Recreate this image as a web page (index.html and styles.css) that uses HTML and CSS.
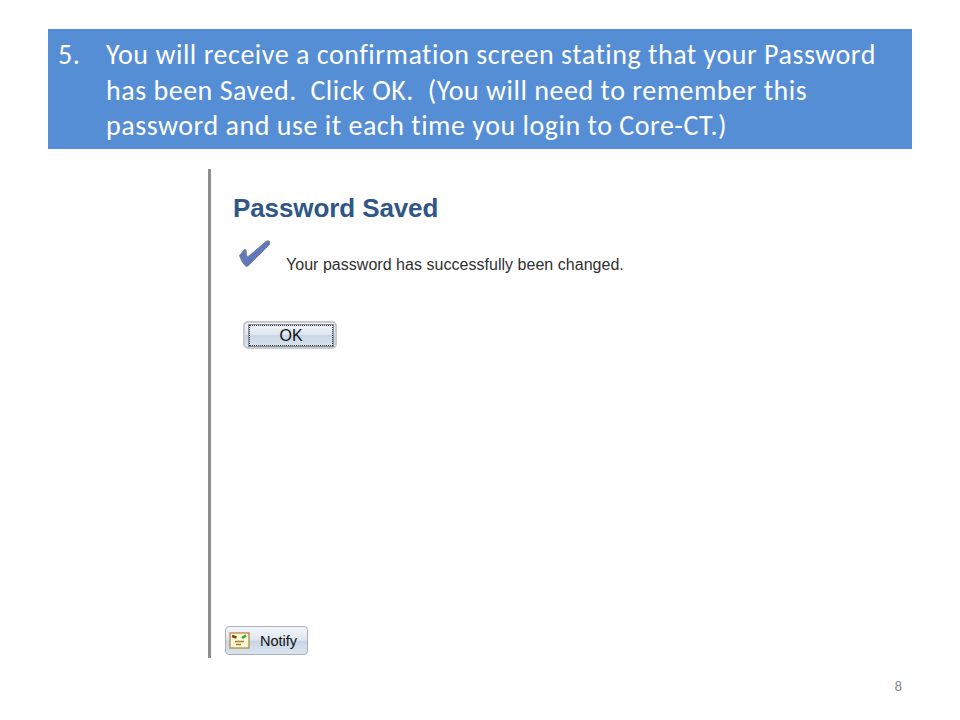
FILE: index.html
```
<!DOCTYPE html>
<html lang="en">

<head>
	<meta charset="UTF-8">
	<title>Password Saved</title>
	<link rel="stylesheet" href="styles.css">
</head>

<body>
	<div class="slide">
		<div class="banner">
			<span class="num">5.</span>
			<p class="step">
				<span class="line">You will receive a confirmation screen stating that your Password</span>
				<span class="line">has been Saved.&nbsp; Click OK.&nbsp; (You will need to remember this</span>
				<span class="line">password and use it each time you login to Core-CT.)</span>
			</p>
		</div>
		<div class="screen">
			<h1 class="title">Password Saved</h1>
			<div class="message">
				<svg class="check" width="34" height="30" viewBox="0 0 34 30">
					<path d="M1.5 16.5 L6.5 10.5 L8 11 L8.5 16.5 Q9.5 18 11 17 L28 2.5 Q30 1 31.5 2.5 Q32.5 4 31 6 L11 26 Q9 28.5 7 26.5 Q3.5 23 1.5 16.5Z" fill="#5f77bb" stroke="#7c8591" />
				</svg>
				<span class="text">Your password has successfully been changed.</span>
			</div>
			<button class="btn ok"><span class="focus">OK</span></button>
			<button class="btn notify">
				<svg width="21" height="17" viewBox="0 0 21 17">
					<rect x="1" y="1" width="19" height="15" fill="#fffbd2" stroke="#bd9560" stroke-width="1.5" />
					<path d="M3 4 L7.5 5.5" stroke="#7a3f20" stroke-width="2.4" />
					<path d="M13 6 L17 3.5" stroke="#36a03c" stroke-width="2.6" />
					<path d="M6 9.5 H15 M7 12.5 H12" stroke="#a57c3e" stroke-width="1.5" />
				</svg>
				<span>Notify</span>
			</button>
		</div>
		<div class="page">8</div>
	</div>
</body>

</html>
```
FILE: styles.css
```
* {
	box-sizing: border-box;
	margin: 0;
	padding: 0;
}

body {
	background: #fff;
	overflow: hidden;
}

.slide {
	width: 960px;
	height: 720px;
	padding: 29px 48px 0;
}

.banner {
	display: flex;
	height: 120px;
	padding: 8px 10px 0;
	background: #558ed5;
	color: #fff;
	font: 28px/35.5px Carlito, Lato, sans-serif;
	font-variant-ligatures: none;
}

.num {
	width: 48px;
	letter-spacing: 0.5px;
}

.line {
	display: block;
	letter-spacing: 0.52px;
	white-space: nowrap;
}

.screen {
	display: flex;
	flex-direction: column;
	align-items: flex-start;
	width: 500px;
	height: 489px;
	margin: 20px 0 0 160px;
	padding: 23px 0 3px 22px;
	border-left: 3px solid #8e8e8e;
	font-family: "Liberation Sans", Arial, sans-serif;
}

.title {
	color: #2f5687;
	font-size: 26px;
	line-height: 32px;
	letter-spacing: -0.1px;
}

.message {
	display: flex;
	margin: 15px 0 0 5px;
}

.text {
	margin: 16px 0 0 14px;
	color: #303030;
	font-size: 16px;
	line-height: 20px;
	letter-spacing: 0.03px;
	white-space: nowrap;
}

.btn {
	border: 1px solid #a9afba;
	border-radius: 4px;
	background: linear-gradient(#f3f6fa 0%, #dfe6f0 48%, #c9d6e7 52%, #dae4f0 100%);
	color: #111;
	font: 16px "Liberation Sans", Arial, sans-serif;
}

.ok {
	width: 94px;
	height: 28px;
	margin: 46px 0 0 10px;
	padding: 2px 1px 2px 3px;
	border: 2px solid #c6c9ce;
	border-radius: 5px;
}

/* dotted focus ring inside the button */
.focus {
	display: block;
	height: 23px;
	margin-top: -1px;
	border: 1px solid #8b9199;
	outline: 1px dotted #333;
	outline-offset: -2px;
	line-height: 21px;
}

.notify {
	display: flex;
	align-items: center;
	gap: 10px;
	width: 83px;
	height: 29px;
	margin: auto 0 0 -8px;
	padding-left: 3px;
	font-size: 14.5px;
}

.page {
	margin: 19px 10px 0 0;
	color: #8b8b8b;
	font: 15px/18px Carlito, Lato, sans-serif;
	text-align: right;
}
```
